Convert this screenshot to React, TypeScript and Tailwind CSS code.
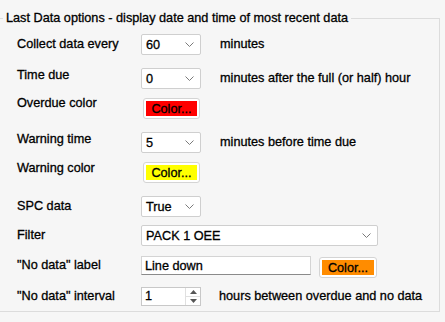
import React from "react";

function Chevron() {
  return (
    <svg width="9" height="5" viewBox="0 0 9 5" className="shrink-0">
      <path d="M0.5 0.5 L4.5 4.5 L8.5 0.5" fill="none" stroke="#7a7a7a" strokeWidth="1" />
    </svg>
  );
}

function Combo({ value, width }: { value: string; width: string }) {
  return (
    <div className={`${width} h-[21px] flex items-center justify-between bg-white border border-[#cfcfcf] rounded-[2px] pl-[4px] pr-[6px]`}>
      <span>{value}</span>
      <Chevron />
    </div>
  );
}

function ColorButton({ fill, width }: { fill: string; width: string }) {
  return (
    <div className={`${width} h-[21px] bg-white border border-[#d4d4d4] rounded-[3px] p-[2px]`}>
      <div className={`${fill} h-full flex items-center justify-center`}>Color...</div>
    </div>
  );
}

export default function App(): JSX.Element {
  return (
    <div
      className="w-[445px] h-[322px] bg-[#f6f6f6] text-black text-[12.7px] leading-[16px] overflow-hidden [-webkit-text-stroke:0.3px_#000]"
      style={{ fontFamily: '"Liberation Sans", Arial, sans-serif' }}
    >
      <div className="mt-[18px] w-[440px] border-t border-r border-b border-[#dcdcdc] pb-[5px]">
        <div className="-mt-[9px] h-[16px] flex">
          <span className="ml-[3px] px-[3px] bg-[#f6f6f6]">
            Last Data options - display date and time of most recent data
          </span>
        </div>

        <div className="mt-[8px] h-[21px] flex items-start pl-[17px]">
          <span className="w-[124px] pt-[2px]">Collect data every</span>
          <Combo value="60" width="w-[60px]" />
          <span className="ml-[19px] pt-[2px]">minutes</span>
        </div>

        <div className="mt-[13px] h-[21px] flex items-start pl-[17px]">
          <span className="w-[124px] -mt-[1px]">Time due</span>
          <Combo value="0" width="w-[60px]" />
          <span className="ml-[19px] pt-[2px]">minutes after the full (or half) hour</span>
        </div>

        <div className="mt-[9px] h-[21px] flex items-start pl-[17px]">
          <span className="w-[126px] -mt-[3px]">Overdue color</span>
          <ColorButton fill="bg-[#ff0000]" width="w-[57px]" />
        </div>

        <div className="mt-[13px] h-[21px] flex items-start pl-[17px]">
          <span className="w-[124px] -mt-[1px]">Warning time</span>
          <Combo value="5" width="w-[60px]" />
          <span className="ml-[19px] pt-[2px]">minutes before time due</span>
        </div>

        <div className="mt-[9px] h-[21px] flex items-start pl-[17px]">
          <span className="w-[126px] -mt-[2px]">Warning color</span>
          <ColorButton fill="bg-[#ffff00]" width="w-[57px]" />
        </div>

        <div className="mt-[13px] h-[20px] flex items-start pl-[17px]">
          <span className="w-[124px] pt-[2px]">SPC data</span>
          <Combo value="True" width="w-[60px]" />
        </div>

        <div className="mt-[9px] h-[21px] flex items-start pl-[17px]">
          <span className="w-[124px] pt-[2px]">Filter</span>
          <Combo value="PACK 1 OEE" width="w-[237px]" />
        </div>

        <div className="mt-[10px] h-[21px] flex items-start pl-[17px]">
          <span className="w-[124px] pt-[1px]">"No data" label</span>
          <div className="w-[170px] h-[19px] bg-white border border-[#d4d4d4] border-b-[#8a8a8a] pl-[3px] flex items-center">
            Line down
          </div>
          <div className="ml-[8px] mt-[1px]">
            <ColorButton fill="bg-[#ff8c00]" width="w-[58px]" />
          </div>
        </div>

        <div className="mt-[10px] h-[19px] flex items-start pl-[17px]">
          <span className="w-[124px] pt-[1px]">"No data" interval</span>
          <div className="w-[60px] h-[19px] bg-white border border-[#c8c8c8] flex">
            <span className="flex-1 pl-[3px] leading-[17px]">1</span>
            <div className="w-[15px] flex flex-col border-l border-[#e0e0e0]">
              <div className="flex-1 flex items-center justify-center border-b border-[#e0e0e0]">
                <svg width="7" height="4" viewBox="0 0 7 4">
                  <path d="M0 4 L3.5 0 L7 4 Z" fill="#555" />
                </svg>
              </div>
              <div className="flex-1 flex items-center justify-center">
                <svg width="7" height="4" viewBox="0 0 7 4">
                  <path d="M0 0 L3.5 4 L7 0 Z" fill="#555" />
                </svg>
              </div>
            </div>
          </div>
          <span className="ml-[18px] pt-[1px]">hours between overdue and no data</span>
        </div>
      </div>
    </div>
  );
}
